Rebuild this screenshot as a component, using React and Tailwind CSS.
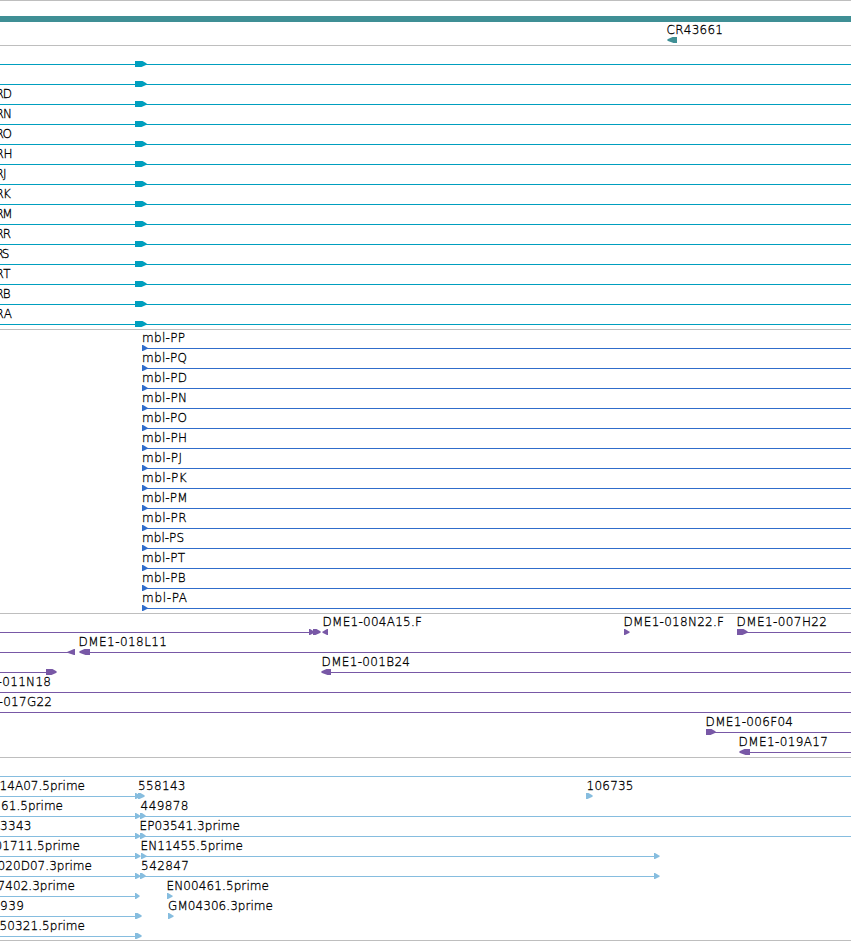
import React from 'react';

const WIDTH = 851;
const ROW = 20;
const FIRST_LINE = 19;

// Labels are [text, x, width], glyphs are [shape, start, end],
// lines are [start, end]. One object per 20px row.
const transcriptNames = ['', '', 'RD', 'RN', 'RO', 'RH', 'RJ', 'RK', 'RM', 'RR', 'RS', 'RT', 'RB', 'RA'];
const transcriptX = {
  RD: [-5, 17], RN: [-5, 17], RO: [-5, 17], RH: [-5, 17.5], RJ: [-5, 11.5], RK: [-5, 16],
  RM: [-5, 17.5], RR: [-5, 16], RS: [-5, 14.5], RT: [-5, 15.5], RB: [-5, 15.5], RA: [-5, 17],
};

const transcripts = transcriptNames.map((name) => ({
  lines: [[0, WIDTH]],
  glyphs: [['right', 135, 147]],
  labels: name ? [[name, ...transcriptX[name]]] : [],
}));

const proteins = [
  ['mbl-PP', 43.5], ['mbl-PQ', 45.5], ['mbl-PD', 45.5], ['mbl-PN', 45.5], ['mbl-PO', 45.5],
  ['mbl-PH', 45.5], ['mbl-PJ', 40.5], ['mbl-PK', 45], ['mbl-PM', 46], ['mbl-PR', 45],
  ['mbl-PS', 42.5], ['mbl-PT', 43.5], ['mbl-PB', 44], ['mbl-PA', 45.5],
].map(([name, width]) => ({
  lines: [[143, WIDTH]],
  glyphs: [['triRight', 142, 148]],
  labels: [[name, 141.5, width]],
}));

const clones = [
  {
    lines: [[0, 313], [744, WIDTH]],
    glyphs: [['triRight', 309, 315], ['right', 313, 321], ['triLeft', 322, 328], ['triRight', 624, 630], ['right', 737, 748]],
    labels: [['DME1-004A15.F', 322, 100], ['DME1-018N22.F', 623, 101], ['DME1-007H22', 736, 91]],
  },
  {
    lines: [[0, 74], [84, WIDTH]],
    glyphs: [['triLeft', 67, 75], ['left', 79, 90]],
    labels: [['DME1-018L11', 78, 89]],
  },
  {
    lines: [[0, 50], [326, WIDTH]],
    glyphs: [['right', 46, 57], ['left', 321, 331]],
    labels: [['DME1-001B24', 321, 89]],
  },
  { lines: [[0, WIDTH]], glyphs: [], labels: [['-011N18', -3, 54]] },
  { lines: [[0, WIDTH]], glyphs: [], labels: [['-017G22', -2, 54]] },
  { lines: [[710, WIDTH]], glyphs: [['right', 706, 716]], labels: [['DME1-006F04', 705, 88]] },
  { lines: [[745, WIDTH]], glyphs: [['left', 739, 750]], labels: [['DME1-019A17', 738, 90]] },
];

const ests = [
  { lines: [[0, WIDTH]], glyphs: [], labels: [] },
  {
    lines: [[0, 138]],
    glyphs: [['triRight', 135, 141], ['right', 138, 145], ['right', 586, 593]],
    labels: [['14A07.5prime', -1, 86], ['558143', 137.5, 48], ['106735', 586, 47.5]],
  },
  {
    lines: [[0, WIDTH]],
    glyphs: [['triRight', 135, 141], ['right', 140, 146]],
    labels: [['61.5prime', 0.5, 62.5], ['449878', 140, 48.5]],
  },
  {
    lines: [[0, WIDTH]],
    glyphs: [['triRight', 135, 141], ['right', 140, 146]],
    labels: [['3343', -0.5, 32], ['EP03541.3prime', 139, 101]],
  },
  {
    lines: [[0, 138], [142, 656]],
    glyphs: [['triRight', 135, 141], ['triRight', 141, 147], ['triRight', 654, 660]],
    labels: [['01711.5prime', -6, 86], ['EN11455.5prime', 140, 103]],
  },
  {
    lines: [[0, 656]],
    glyphs: [['triRight', 135, 141], ['right', 140, 146], ['triRight', 654, 660]],
    labels: [['020D07.3prime', -3, 95], ['542847', 140.5, 48.5]],
  },
  {
    lines: [[0, 138]],
    glyphs: [['triRight', 135, 140], ['triRight', 167, 173]],
    labels: [['7402.3prime', -3, 78], ['EN00461.5prime', 166, 103]],
  },
  {
    lines: [[0, 138]],
    glyphs: [['right', 135, 142], ['triRight', 168, 174]],
    labels: [['939', -0.5, 24.5], ['GM04306.3prime', 167.5, 105.5]],
  },
  {
    lines: [[0, 138]],
    glyphs: [['right', 135, 142]],
    labels: [['50321.5prime', -1, 86]],
  },
];

function glyphPoints(shape, start, end, y) {
  const top = y - 3;
  const bottom = y + 3;
  const length = end - start;
  switch (shape) {
    case 'right': {
      const neck = start + Math.max(2, length - 4.5);
      return `${start},${top} ${neck},${top} ${end - 1},${y - 1} ${end},${y} ${end - 1},${y + 1} ${neck - 1},${bottom} ${start},${bottom}`;
    }
    case 'left': {
      const neck = end - Math.max(2, length - 5.5);
      return `${end},${top} ${neck},${top} ${start + 1},${y - 1} ${start},${y} ${start + 1},${y + 1} ${neck + 1},${bottom} ${end},${bottom}`;
    }
    case 'triLeft':
      return `${end},${top} ${end - 1},${top} ${start},${y} ${start + 1},${y + 1} ${end - 1},${bottom} ${end},${bottom}`;
    default:
      return `${start},${top} ${start + 1},${top} ${end},${y} ${end - 1},${y + 1} ${start + 1},${bottom} ${start},${bottom}`;
  }
}

function Label({ text, x, y, width }) {
  return (
    <text
      x={x + 0.6}
      y={y}
      textLength={width - 0.6}
      lengthAdjust="spacing"
      className="fill-black stroke-black font-extralight"
      strokeWidth="0.3"
    >
      {text}
    </text>
  );
}

function Track({ rows, className, children }) {
  return (
    <section className={`shrink-0 overflow-hidden border-t border-[#bebebe] ${className}`}>
      <svg className="block h-full w-full fill-current" fontSize="12">
        {children}
        {rows.map((row, i) => {
          // section border takes the first pixel
          const y = FIRST_LINE - 1 + i * ROW;
          return (
            <g key={i}>
              {row.lines.map(([start, end], j) => (
                <rect key={j} x={start} y={y} width={end - start} height="1" />
              ))}
              {row.glyphs.map(([shape, start, end], j) => (
                <polygon key={j} points={glyphPoints(shape, start, end, y)} />
              ))}
              {row.labels.map(([text, x, width]) => (
                <Label key={text} text={text} x={x} y={y - 6} width={width} />
              ))}
            </g>
          );
        })}
      </svg>
    </section>
  );
}

function App() {
  return (
    <main className="flex h-[941px] w-[851px] flex-col overflow-hidden border-b border-[#bebebe] bg-white font-['DejaVu_Sans',sans-serif]">
      <Track rows={[]} className="h-[45px] text-[#3f8f95]">
        <rect x="0" y="15" width={WIDTH} height="6" />
        <Label text="CR43661" x={666} y={33} width={57} />
        <polygon points={glyphPoints('left', 667, 677, 39)} />
      </Track>
      <Track rows={transcripts} className="h-[284px] text-[#009fbf]" />
      <Track rows={proteins} className="h-[284px] text-[#306dcb]" />
      <Track rows={clones} className="h-[144px] text-[#7858a6]" />
      <Track rows={ests} className="h-[183px] text-[#86bddf]" />
    </main>
  );
}

export default App;
